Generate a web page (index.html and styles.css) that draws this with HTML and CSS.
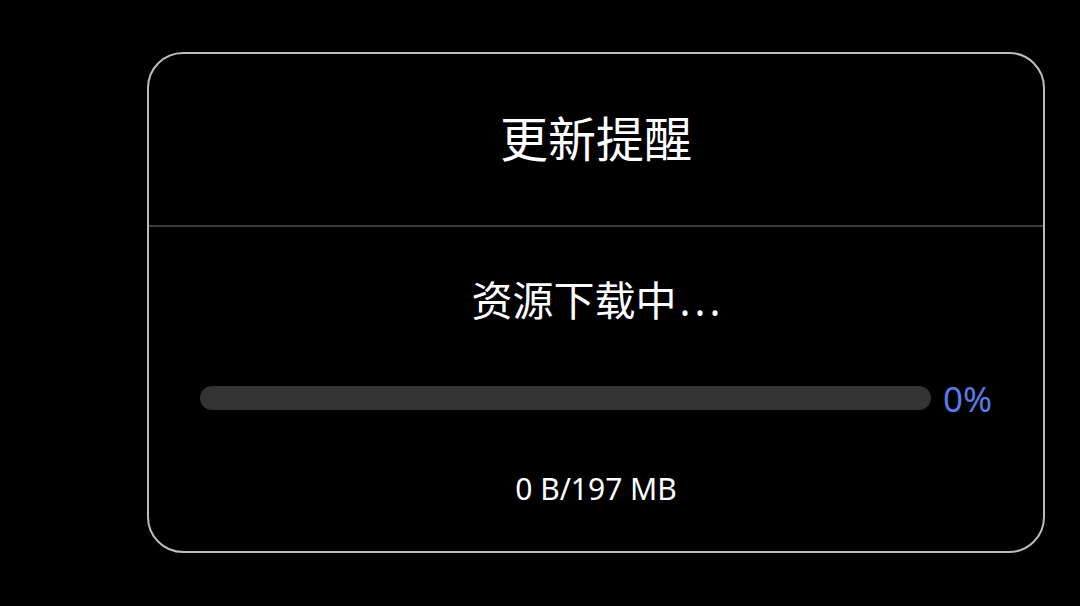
FILE: index.html
```html
<!DOCTYPE html>
<html lang="zh-CN">
<head>
<meta charset="utf-8">
<link rel="stylesheet" href="styles.css">
</head>
<body>
<div class="dialog">
  <div class="header"><h1 class="title">更新提醒</h1></div>
  <div class="body">
    <div class="status">资源下载中<span class="dots">...</span></div>
    <div class="progress-row">
      <div class="track"><div class="fill" style="width:0%"></div></div>
      <div class="percent">0%</div>
    </div>
    <div class="size">0 B/197 MB</div>
  </div>
</div>
</body>
</html>
```
FILE: styles.css
```css
html, body { margin: 0; padding: 0; background: #000; }
body {
  width: 1080px; height: 606px; overflow: hidden;
  font-family: "Noto Sans", "Noto Sans CJK SC", sans-serif;
  color: #fff;
}
.dialog {
  box-sizing: border-box;
  margin: 52px 0 0 147px;
  width: 898px;
  height: 501px;
  border: 2px solid #bdbdbd;
  border-radius: 36px;
  display: flex;
  flex-direction: column;
}
.header {
  height: 171px;
  border-bottom: 2px solid #3c3c3c;
  display: flex;
  align-items: center;
  justify-content: center;
}
.title {
  margin: 0;
  font-family: "Noto Sans CJK SC", sans-serif;
  font-weight: 400;
  font-size: 48px;
  line-height: 1;
  position: relative;
  top: -4px;
}
.body {
  display: flex;
  flex-direction: column;
  align-items: center;
  padding-top: 47px;
}
.status {
  font-family: "Noto Sans CJK SC", sans-serif;
  font-size: 41px;
  line-height: 48px;
  padding-left: 4px;
}
.dots {
  font-family: "Noto Sans", sans-serif;
  letter-spacing: 4px;
  margin-left: 3px;
}
.progress-row {
  margin-top: 56px;
  width: 100%;
  box-sizing: border-box;
  padding: 0 0 0 51px;
  display: flex;
  align-items: center;
  gap: 12px;
}
.track {
  width: 731px;
  height: 24px;
  border-radius: 12px;
  background: #333;
  overflow: hidden;
}
.fill { height: 100%; background: #5b7be8; }
.percent {
  color: #5a7ae6;
  font-size: 35px;
  line-height: 36px;
  position: relative;
  top: 1px;
}
.size {
  margin-top: 56px;
  font-size: 30px;
  line-height: 34px;
}
```
